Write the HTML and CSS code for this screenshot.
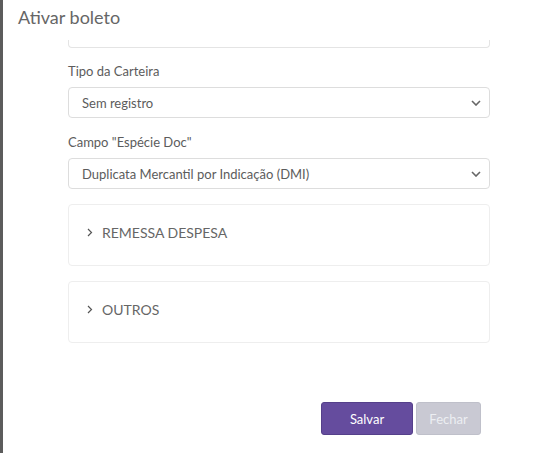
FILE: index.html
```html
<!DOCTYPE html>
<html lang="pt-BR">
<head>
    <meta charset="UTF-8">
    <title>Ativar boleto</title>
    <link rel="stylesheet" href="styles.css">
</head>
<body>
    <div class="modal">
        <div class="modal-header">Ativar boleto</div>

        <div class="modal-body">
            <div class="input-stub"></div>

            <div class="form-group">
                <label class="form-label">Tipo da Carteira</label>
                <div class="select">
                    <span>Sem registro</span>
                    <svg class="caret" width="10" height="6" viewBox="0 0 10 6"><path d="M1 1l4 4 4-4" fill="none" stroke="#666" stroke-width="1.6"/></svg>
                </div>
            </div>

            <div class="form-group">
                <label class="form-label">Campo "Espécie Doc"</label>
                <div class="select">
                    <span>Duplicata Mercantil por Indicação (DMI)</span>
                    <svg class="caret" width="10" height="6" viewBox="0 0 10 6"><path d="M1 1l4 4 4-4" fill="none" stroke="#666" stroke-width="1.6"/></svg>
                </div>
            </div>

            <div class="panel">
                <svg class="chevron" width="6" height="9" viewBox="0 0 6 9"><path d="M1 1l3.5 3.5L1 8" fill="none" stroke="#555" stroke-width="1.2"/></svg>
                <span>REMESSA DESPESA</span>
            </div>

            <div class="panel">
                <svg class="chevron" width="6" height="9" viewBox="0 0 6 9"><path d="M1 1l3.5 3.5L1 8" fill="none" stroke="#555" stroke-width="1.2"/></svg>
                <span>OUTROS</span>
            </div>
        </div>

        <div class="modal-footer">
            <button class="btn btn-primary">Salvar</button>
            <button class="btn btn-muted">Fechar</button>
        </div>
    </div>
</body>
</html>
```

FILE: styles.css
```css
* {
    margin: 0;
    padding: 0;
    box-sizing: border-box;
    font-family: Lato, "Open Sans", sans-serif;
}

body {
    background: #fff;
    height: 453px;
    overflow: hidden;
    border-left: 3px solid #5c5c5c;
}

.modal {
    width: 543px;
    height: 453px;
    display: flex;
    flex-direction: column;
}

.modal-header {
    padding: 6px 0 0 15px;
    height: 40px;
    font-size: 18px;
    color: #666;
}

.modal-body {
    margin-left: 65px;
    width: 422px;
}

/* campo cortado pelo scroll */
.input-stub {
    height: 8px;
    border: 1px solid #e4e4e4;
    border-top: none;
    border-radius: 0 0 4px 4px;
    margin-bottom: 15px;
}

.form-group {
    margin-bottom: 16px;
}

.form-group + .form-group {
    margin-bottom: 15px;
}

.form-label {
    display: block;
    font-size: 13px;
    color: #5c5c5c;
    line-height: 16px;
    margin-bottom: 8px;
}

.select {
    height: 31px;
    border: 1px solid #ddd;
    border-radius: 4px;
    display: flex;
    align-items: center;
    justify-content: space-between;
    padding: 0 8px 0 13px;
    font-size: 13px;
    color: #5c5c5c;
}

.caret {
    margin-top: 1px;
}

.panel {
    height: 62px;
    border: 1px solid #eee;
    border-radius: 4px;
    display: flex;
    align-items: center;
    padding: 0 0 6px 18px;
    margin-bottom: 15px;
    font-size: 14px;
    color: #666;
}

.chevron {
    margin-right: 9px;
}

.modal-footer {
    margin-top: auto;
    margin-bottom: 18px;
    display: flex;
    gap: 3px;
    padding-left: 318px;
}

.btn {
    height: 33px;
    border: none;
    border-radius: 3px;
    font-size: 13px;
    color: #fff;
}

.btn-primary {
    width: 92px;
    background: #654c9e;
    border: 1px solid #55408a;
}

.btn-muted {
    width: 65px;
    background: #c9c9d3;
    border: 1px solid #bfc0ca;
    color: #eceef2;
}
```
